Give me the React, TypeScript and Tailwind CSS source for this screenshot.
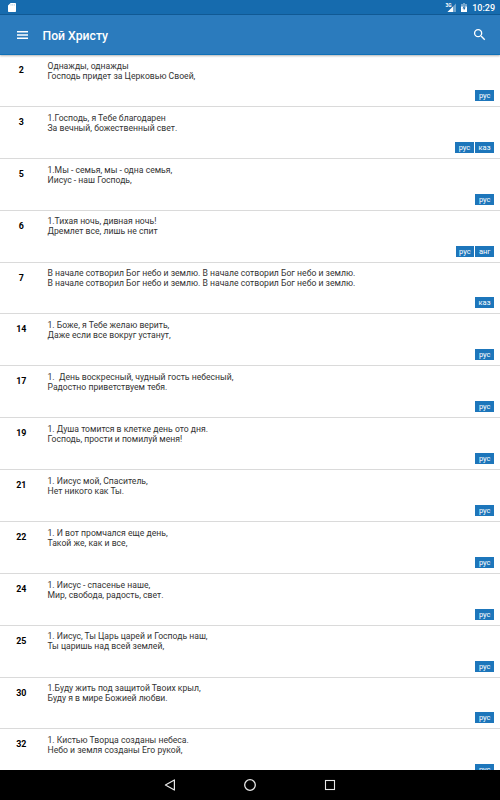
import React from 'react';

interface Song {
  id: number;
  lines: [string, string];
  langs: string[];
}

const verse = 'В начале сотворил Бог небо и землю. В начале сотворил Бог небо и землю.';

const songs: Song[] = [
  { id: 2, lines: ['Однажды, однажды', 'Господь придет за Церковью Своей,'], langs: ['рус'] },
  { id: 3, lines: ['1.Господь, я Тебе благодарен', 'За вечный, божественный свет.'], langs: ['рус', 'каз'] },
  { id: 5, lines: ['1.Мы - семья, мы - одна семья,', 'Иисус - наш Господь,'], langs: ['рус'] },
  { id: 6, lines: ['1.Тихая ночь, дивная ночь!', 'Дремлет все, лишь не спит'], langs: ['рус', 'анг'] },
  { id: 7, lines: [verse, verse], langs: ['каз'] },
  { id: 14, lines: ['1. Боже, я Тебе желаю верить,', 'Даже если все вокруг устанут,'], langs: ['рус'] },
  { id: 17, lines: ['1.  День воскресный, чудный гость небесный,', 'Радостно приветствуем тебя.'], langs: ['рус'] },
  { id: 19, lines: ['1. Душа томится в клетке день ото дня.', 'Господь, прости и помилуй меня!'], langs: ['рус'] },
  { id: 21, lines: ['1. Иисус мой, Спаситель,', 'Нет никого как Ты.'], langs: ['рус'] },
  { id: 22, lines: ['1. И вот промчался еще день,', 'Такой же, как и все,'], langs: ['рус'] },
  { id: 24, lines: ['1. Иисус - спасенье наше,', 'Мир, свобода, радость, свет.'], langs: ['рус'] },
  { id: 25, lines: ['1. Иисус, Ты Царь царей и Господь наш,', 'Ты царишь над всей землей,'], langs: ['рус'] },
  { id: 30, lines: ['1.Буду жить под защитой Твоих крыл,', 'Буду я в мире Божией любви.'], langs: ['рус'] },
  { id: 32, lines: ['1. Кистью Творца созданы небеса.', 'Небо и земля созданы Его рукой,'], langs: ['рус'] },
];

const StatusBar: React.FC = () => (
  <div className="flex h-[15px] shrink-0 items-center justify-between border-b border-[#115b97] bg-[#166bae] pr-[5px] pl-2 text-white">
    <svg className="mt-px h-[9px] w-2" viewBox="0 0 8 9" fill="currentColor">
      <path d="M2.6 0H7.3Q8 0 8 .7V8.3Q8 9 7.3 9H.7Q0 9 0 8.3V2.6Z" />
      <path d="M3 1.2V2.6M4.7 1.2V2.6M6.4 1.2V2.6" stroke="#9cc2df" strokeWidth=".7" />
    </svg>
    <div className="flex items-center pt-px">
      <svg className="mr-[5px] h-[10px] w-[11px]" viewBox="0 0 11 10" fill="currentColor">
        <path d="M11 .5V9H2.5Z" opacity=".4" />
        <path d="M8 3.5V9H2.5Z" />
        <text x="0.5" y="4" fontSize="4.8" fontWeight="700" fontFamily="Roboto, sans-serif">3G</text>
      </svg>
      <svg className="mr-[5px] h-[9px] w-[6px]" viewBox="0 0 6 9" fill="currentColor">
        <path d="M2 0H4V1H6V4H0V1H2Z" opacity=".4" />
        <path d="M0 3.6H6V9H0Z" />
        <path d="M3.5 2.2 1.5 5.4H2.8V7.4L4.7 4.5H3.5Z" fill="#166bae" />
      </svg>
      <span className="text-[9px] leading-[14px] font-medium">10:29</span>
    </div>
  </div>
);

const AppBar: React.FC = () => (
  <header className="z-10 flex h-[40px] shrink-0 items-center border-b border-[#0f70b8] bg-[#2b7bbd] pt-px pr-[12.5px] pl-[17px] text-white shadow-[0_1px_2px_rgba(0,0,0,0.3)]">
    <svg className="h-[8px] w-[11px]" viewBox="0 0 11 8" fill="currentColor">
      <path d="M0 0H11V1.5H0ZM0 3.25H11V4.75H0ZM0 6.5H11V8H0Z" />
    </svg>
    <h1 className="ml-[14.5px] flex-1 pt-px text-[12.2px] leading-[16px] font-medium">Пой Христу</h1>
    <svg className="h-[15.5px] w-[15.5px]" viewBox="0 0 24 24" fill="currentColor">
      <path d="M15.5 14h-.79l-.28-.27A6.471 6.471 0 0 0 16 9.5 6.5 6.5 0 1 0 9.5 16c1.61 0 3.09-.59 4.23-1.57l.27.28v.79l5 4.99L20.49 19l-4.99-5zm-6 0C7.01 14 5 11.99 5 9.5S7.01 5 9.5 5 14 7.01 14 9.5 11.99 14 9.5 14z" />
    </svg>
  </header>
);

const SongRow: React.FC<{ song: Song }> = ({ song }) => (
  <li className="flex h-[51.875px] border-b border-[#dadada]">
    <div className="w-[42.5px] shrink-0 pt-[10px] text-center text-[8.9px] leading-[10px] font-bold text-black">
      {song.id}
    </div>
    <div className="flex flex-1 flex-col justify-between pt-[5.8px] pr-[6px] pb-[5px] pl-[5px]">
      <div className="text-[8.64px] leading-[10px] whitespace-pre text-[#333]">
        <p>{song.lines[0]}</p>
        <p>{song.lines[1]}</p>
      </div>
      <div className="flex justify-end gap-[1.3px]">
        {song.langs.map((lang) => (
          <span key={lang} className="h-[11px] bg-[#1d76bb] px-[3.5px] text-[7.5px] leading-[11px] text-white">
            {lang}
          </span>
        ))}
      </div>
    </div>
  </li>
);

const NavBar: React.FC = () => (
  <nav className="flex h-[30px] shrink-0 items-center justify-center gap-[68px] bg-black text-[#e8e8e8]">
    <svg className="h-3 w-3" viewBox="0 0 12 12" fill="none" stroke="currentColor" strokeWidth="1.2">
      <path d="M10.4 .9V11.1L1.4 6Z" strokeLinejoin="round" />
    </svg>
    <svg className="h-3 w-3" viewBox="0 0 12 12" fill="none" stroke="currentColor" strokeWidth="1.3">
      <circle cx="6" cy="6" r="5.3" />
    </svg>
    <svg className="h-3 w-3" viewBox="0 0 12 12" fill="none" stroke="currentColor" strokeWidth="1.1">
      <rect x="1.5" y="1.5" width="9" height="9" />
    </svg>
  </nav>
);

const App: React.FC = () => {
  return (
    <div className="flex h-[800px] w-[500px] flex-col overflow-hidden bg-white font-['Roboto',sans-serif]">
      <StatusBar />
      <AppBar />
      <ul className="min-h-0 flex-1 overflow-hidden">
        {songs.map((song) => (
          <SongRow key={song.id} song={song} />
        ))}
      </ul>
      <NavBar />
    </div>
  );
};

export default App;
